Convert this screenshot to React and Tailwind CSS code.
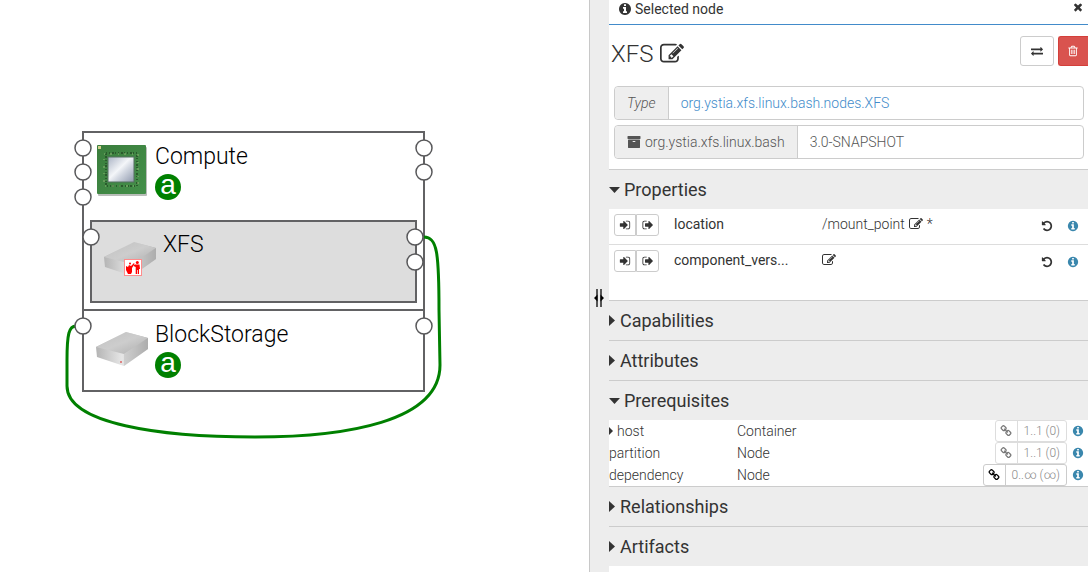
const P = {
  info: "M1152 1376v-160q0-14-9-23t-23-9h-96v-512q0-14-9-23t-23-9h-320q-14 0-23 9t-9 23v160q0 14 9 23t23 9h96v320h-96q-14 0-23 9t-9 23v160q0 14 9 23t23 9h448q14 0 23-9t9-23zm-128-896v-160q0-14-9-23t-23-9h-192q-14 0-23 9t-9 23v160q0 14 9 23t23 9h192q14 0 23-9t9-23zm640 416q0 209-103 385.5t-279.5 279.5-385.5 103-385.5-103-279.5-279.5-103-385.5 103-385.5 279.5-279.5 385.5-103 385.5 103 279.5 279.5 103 385.5z",
  edit: "M888 1184l116-116-152-152-116 116v56h96v96h56zm440-720q-16-16-33 1l-350 350q-17 17-1 33t33-1l350-350q17-17 1-33zm80 594v190q0 119-84.5 203.5t-203.5 84.5h-832q-119 0-203.5-84.5t-84.5-203.5v-832q0-119 84.5-203.5t203.5-84.5h832q63 0 117 25 15 7 18 23 3 17-9 29l-49 49q-14 14-32 8-23-6-45-6h-832q-66 0-113 47t-47 113v832q0 66 47 113t113 47h832q66 0 113-47t47-113v-126q0-13 9-22l64-64q15-15 35-7t20 29zm-96-738l288 288-672 672h-288v-288zm444 132l-92 92-288-288 92-92q28-28 68-28t68 28l152 152q28 28 28 68t-28 68z",
  signIn: "M1312 896q0 26-19 45l-544 544q-19 19-45 19t-45-19-19-45v-288h-448q-26 0-45-19t-19-45v-384q0-26 19-45t45-19h448v-288q0-26 19-45t45-19 45 19l544 544q19 19 19 45zm352-352v704q0 119-84.5 203.5t-203.5 84.5h-320q-13 0-22.5-9.5t-9.5-22.5q0-4-1-20t-.5-26.5 3-23.5 10-19.5 20.5-6.5h320q66 0 113-47t47-113v-704q0-66-47-113t-113-47h-312l-11.5-1-11.5-3-8-5.5-7-9-2-13.5q0-4-1-20t-.5-26.5 3-23.5 10-19.5 20.5-6.5h320q119 0 203.5 84.5t84.5 203.5z",
  signOut: "M704 1440q0 4 1 20t.5 26.5-3 23.5-10 19.5-20.5 6.5h-320q-119 0-203.5-84.5t-84.5-203.5v-704q0-119 84.5-203.5t203.5-84.5h320q13 0 22.5 9.5t9.5 22.5q0 4 1 20t.5 26.5-3 23.5-10 19.5-20.5 6.5h-320q-66 0-113 47t-47 113v704q0 66 47 113t113 47h312l11.5 1 11.5 3 8 5.5 7 9 2 13.5zm928-544q0 26-19 45l-544 544q-19 19-45 19t-45-19-19-45v-288h-448q-26 0-45-19t-19-45v-384q0-26 19-45t45-19h448v-288q0-26 19-45t45-19 45 19l544 544q19 19 19 45z",
  undo: "M1664 896q0 156-61 298t-164 245-245 164-298 61q-172 0-327-72.5t-264-204.5q-7-10-6.5-22.5t8.5-20.5l137-138q10-9 25-9 16 2 23 12 73 95 179 147t225 52q104 0 198.5-40.5t163.5-109.5 109.5-163.5 40.5-198.5-40.5-198.5-109.5-163.5-163.5-109.5-198.5-40.5q-98 0-188 35.5t-160 101.5l137 138q31 30 14 69-17 40-59 40h-448q-26 0-45-19t-19-45v-448q0-42 40-59 39-17 69 14l130 129q107-101 244.5-156.5t284.5-55.5q156 0 298 61t245 164 164 245 61 298z",
  trash: "M704 736v576q0 14-9 23t-23 9h-64q-14 0-23-9t-9-23v-576q0-14 9-23t23-9h64q14 0 23 9t9 23zm256 0v576q0 14-9 23t-23 9h-64q-14 0-23-9t-9-23v-576q0-14 9-23t23-9h64q14 0 23 9t9 23zm256 0v576q0 14-9 23t-23 9h-64q-14 0-23-9t-9-23v-576q0-14 9-23t23-9h64q14 0 23 9t9 23zm128 724v-948h-896v948q0 22 7 40.5t14.5 27 10.5 8.5h832q3 0 10.5-8.5t14.5-27 7-40.5zm-672-1076h448l-48-117q-7-9-17-11h-317q-10 2-17 11zm928 32v64q0 14-9 23t-23 9h-96v948q0 83-47 143.5t-113 60.5h-832q-66 0-113-58.5t-47-141.5v-952h-96q-14 0-23-9t-9-23v-64q0-14 9-23t23-9h309l70-167q15-37 54-63t79-26h320q40 0 79 26t54 63l70 167h309q14 0 23 9t9 23z",
  times: "M1490 1322q0 40-28 68l-136 136q-28 28-68 28t-68-28l-294-294-294 294q-28 28-68 28t-68-28l-136-136q-28-28-28-68t28-68l294-294-294-294q-28-28-28-68t28-68l136-136q28-28 68-28t68 28l294 294 294-294q28-28 68-28t68 28l136 136q28 28 28 68t-28 68l-294 294 294 294q28 28 28 68z",
  archive: "M1088 832q0-26-19-45t-45-19h-256q-26 0-45 19t-19 45 19 45 45 19h256q26 0 45-19t19-45zm576-192v960q0 26-19 45t-45 19h-1408q-26 0-45-19t-19-45v-960q0-26 19-45t45-19h1408q26 0 45 19t19 45zm64-448v256q0 26-19 45t-45 19h-1536q-26 0-45-19t-19-45v-256q0-26 19-45t45-19h1536q26 0 45 19t19 45z",
  exchange: "M1792 1184v192q0 13-9.5 22.5t-22.5 9.5h-1376v192q0 13-9.5 22.5t-22.5 9.5q-12 0-24-10l-319-320q-9-9-9-22 0-14 9-23l320-320q9-9 23-9 13 0 22.5 9.5t9.5 22.5v192h1376q13 0 22.5 9.5t9.5 22.5zm0-544q0 14-9 23l-320 320q-9 9-23 9-13 0-22.5-9.5t-9.5-22.5v-192h-1376q-13 0-22.5-9.5t-9.5-22.5v-192q0-13 9.5-22.5t22.5-9.5h1376v-192q0-14 9-23t23-9q12 0 24 10l319 319q9 9 9 23z",
  link: "M1520 1216q0-40-28-68l-208-208q-28-28-68-28-42 0-72 32 3 3 19 18.5t21.5 21.5 15 19 13 25.5 3.5 27.5q0 40-28 68t-68 28q-15 0-27.5-3.5t-25.5-13-19-15-21.5-21.5-18.5-19q-33 31-33 73 0 40 28 68l206 207q27 27 68 27 40 0 68-26l147-146q28-28 28-67zm-703-705q0-40-28-68l-206-207q-28-28-68-28-39 0-68 27l-147 146q-28 28-28 67 0 40 28 68l208 208q27 27 68 27 42 0 72-31-3-3-19-18.5t-21.5-21.5-15-19-13-25.5-3.5-27.5q0-40 28-68t68-28q15 0 27.5 3.5t25.5 13 19 15 21.5 21.5 18.5 19q33-31 33-73zm895 705q0 120-85 203l-147 146q-83 83-203 83-121 0-204-85l-206-207q-83-83-83-203 0-123 88-209l-88-88q-86 88-208 88-120 0-204-84l-208-208q-84-84-84-204t85-203l147-146q83-83 203-83 121 0 204 85l206 207q83 83 83 203 0 123-88 209l88 88q86-88 208-88 120 0 204 84l208 208q84 84 84 204z",
};

function Icon({ name, className = "size-3.5" }) {
  return (
    <svg viewBox="0 0 1792 1792" fill="currentColor" aria-hidden="true" className={`shrink-0 ${className}`}>
      <path d={P[name]} />
    </svg>
  );
}

function Chip() {
  return (
    <svg viewBox="0 0 52 52" className="size-[52px] shrink-0" aria-hidden="true">
      <defs>
        <linearGradient id="die" x1="0" y1="0" x2="1" y2="1">
          <stop offset="0" stopColor="#aab3c4" />
          <stop offset=".45" stopColor="#f4f6f9" />
          <stop offset=".6" stopColor="#d5dae3" />
          <stop offset="1" stopColor="#8e98ad" />
        </linearGradient>
        <linearGradient id="board" x1="0" y1="0" x2="1" y2="1">
          <stop offset="0" stopColor="#3a7d3c" />
          <stop offset="1" stopColor="#44904a" />
        </linearGradient>
      </defs>
      <rect x="2" y="2" width="49" height="49" rx="1" fill="#b9bdb9" />
      <rect x="1" y="0" width="49" height="49" rx="1" fill="url(#board)" />
      <rect x="2" y="1" width="3" height="3" fill="#cfd08c" />
      <rect x="10" y="8" width="31" height="33" fill="none" stroke="#2a5a2c" strokeWidth="2" strokeDasharray="1 2 1 2 2 1" />
      <rect x="8" y="9" width="34" height="32" fill="none" stroke="#8fb374" strokeWidth="1" strokeDasharray="1 5 2 6" />
      <rect x="12" y="12" width="26" height="25" fill="url(#die)" stroke="#557060" />
    </svg>
  );
}

function Disk({ id }) {
  return (
    <svg viewBox="0 0 52 36" className="h-9 w-[52px] shrink-0" aria-hidden="true">
      <defs>
        <linearGradient id={`${id}-top`} x1="0" y1="0" x2="1" y2="1">
          <stop offset="0" stopColor="#c0c0c0" />
          <stop offset=".5" stopColor="#cdcdcd" />
          <stop offset="1" stopColor="#adadad" />
        </linearGradient>
        <linearGradient id={`${id}-side`} x1="0" y1="0" x2="1" y2="0">
          <stop offset="0" stopColor="#b4b4b4" />
          <stop offset=".5" stopColor="#e6e6e6" />
          <stop offset="1" stopColor="#a8a8a8" />
        </linearGradient>
      </defs>
      <path d="M0 16L30 1L52 7V18L28 35L1 26Z" fill={`url(#${id}-side)`} />
      <path d="M0 16L30 1L52 7L28 23Z" fill={`url(#${id}-top)`} />
      <path d="M28 23L52 7V18L28 35Z" fill="#b4b4b4" opacity=".4" />
      <circle cx="25" cy="31" r="1" fill="#d66" />
    </svg>
  );
}

function FormatBadge() {
  return (
    <svg viewBox="0 0 18 17" className="absolute top-[26px] left-5 h-[17px] w-[18px]" aria-hidden="true">
      <rect x=".5" y=".5" width="17" height="16" fill="#fff" stroke="#ff8c8c" />
      <path d="M2 7L4 8L5 6L7 7L10 4L10.500 5L8 9L8 13L7 15H4L2 11Z" fill="#f00" />
      <path d="M11 5.500H15.500L16 10H15V15H13.700V11H13V15H11.700V8L9.500 7L10 6Z" fill="#f00" />
      <circle cx="6" cy="4.500" r="1" fill="#f00" />
      <circle cx="13.300" cy="3.500" r="1.500" fill="#f00" />
    </svg>
  );
}

function Abstract() {
  return (
    <span className="mt-[5px] block size-[26px] rounded-full bg-[#008000] text-center font-['Liberation_Sans',sans-serif] text-[28px] leading-[22px] font-normal text-white">
      a
    </span>
  );
}

const ports = [
  [83, 148], [83, 172], [83, 197], [424, 148], [424, 172],
  [91, 237], [415, 237], [415, 262], [83, 326], [424, 326],
];

function Canvas() {
  return (
    <main className="relative min-w-0 flex-1 overflow-hidden bg-white text-[23px] leading-6 font-light text-black">
      <section className="absolute top-[131px] left-[82px] flex h-[180px] w-[343px] gap-[7px] border-2 border-[#626264] pt-3 pl-3">
        <Chip />
        <div>
          <h2>Compute</h2>
          <Abstract />
        </div>
      </section>
      <section className="absolute top-[309px] left-[82px] flex h-[83px] w-[343px] gap-[7px] border-2 border-[#626264] pt-3 pl-3">
        <div className="pt-2"><Disk id="block" /></div>
        <div>
          <h2>BlockStorage</h2>
          <Abstract />
        </div>
      </section>
      <section className="absolute top-[220px] left-[90px] flex h-[83px] w-[327px] gap-[7px] border-2 border-[#626264] bg-[#dddddd] pt-[11px] pl-3">
        <div className="relative pt-2"><Disk id="xfs" /><FormatBadge /></div>
        <h2>XFS</h2>
      </section>
      <svg className="absolute top-0 left-0 h-[460px] w-[460px]" aria-hidden="true">
        <path d="M424 237C437 237 439 252 439 310L440 365C440 422 345 437 255 437C160 437 67 424 67 386V360C67 334 69 326 76 326" fill="none" stroke="#008000" strokeWidth="3" />
        {ports.map(([x, y]) => (
          <circle key={`${x}-${y}`} cx={x} cy={y} r="8" fill="#fff" stroke="#58585a" strokeWidth="1.500" />
        ))}
      </svg>
    </main>
  );
}

function Heading({ title, open }) {
  return (
    <h3 className="border-t border-[#cccccc] bg-[#ededed]">
      <button type="button" aria-expanded={!!open} className="flex h-[39px] w-full items-center gap-1 text-lg font-normal">
        {open ? (
          <svg viewBox="0 0 11 6" className="h-1.5 w-[11px]" aria-hidden="true"><path d="M0 0H11L5.500 6Z" fill="currentColor" /></svg>
        ) : (
          <svg viewBox="0 0 7 11" className="h-[11px] w-[7px]" aria-hidden="true"><path d="M0 0V11L6 5.500Z" fill="currentColor" /></svg>
        )}
        {title}
      </button>
    </h3>
  );
}

function Property({ name, value, required, last }) {
  return (
    <div className={last ? "flex h-[55px] items-start pt-[5px]" : "flex h-9 items-start border-b border-[#dddddd] pt-[5px]"}>
      <div className="flex pl-[5px]">
        <button type="button" aria-label="Set as input" className="flex h-[22px] w-[22px] items-center justify-center rounded-l-[3px] border border-[#cccccc]">
          <Icon name="signIn" className="size-3" />
        </button>
        <button type="button" aria-label="Set as output" className="flex h-[22px] w-[23px] items-center justify-center rounded-r-[3px] border border-[#cccccc]">
          <Icon name="signOut" className="size-3" />
        </button>
      </div>
      <div className="w-[163px] pl-[15px] font-normal">{name}</div>
      <div className="flex min-w-0 flex-1 items-center gap-1">
        {value && <span>{value}</span>}
        <button type="button" aria-label={`Edit ${name}`} className="flex h-5 items-center"><Icon name="edit" /></button>
        {required && <span>*</span>}
      </div>
      <div className="flex items-center gap-3.5 pt-1.5 pr-[9px]">
        <button type="button" aria-label="Reset"><Icon name="undo" className="size-3" /></button>
        <Icon name="info" className="size-3 text-[#3a87ad]" />
      </div>
    </div>
  );
}

function Requirement({ name, type, bounds, nested, active }) {
  return (
    <tr className="h-[22px]">
      <td className="w-32 p-0">
        <span className="flex items-center gap-1">
          {nested && <svg viewBox="0 0 4 8" className="h-2 w-1" aria-hidden="true"><path d="M0 0V8L4 4Z" fill="currentColor" /></svg>}
          {name}
        </span>
      </td>
      <td className="p-0">{type}</td>
      <td className="p-0">
        <div className="flex items-center justify-end gap-[5px] pr-1">
          <div className={active ? "flex h-[22px] rounded-[3px] border border-[#cccccc]" : "flex h-[22px] rounded-[3px] border border-[#dddddd]"}>
            <button type="button" disabled={!active} aria-label={`Link ${name}`} className={active ? "flex w-[22px] items-center justify-center border-r border-[#cccccc] text-black" : "flex w-[22px] items-center justify-center border-r border-[#dddddd] text-[#777777]"}>
              <Icon name="link" className="size-3" />
            </button>
            <span className="px-1.5 text-xs leading-5 text-[#888888]">{bounds}</span>
          </div>
          <Icon name="info" className="size-3 text-[#3a87ad]" />
        </div>
      </td>
    </tr>
  );
}

function Panel() {
  return (
    <aside className="flex w-[499px] shrink-0 border-l border-[#c8c8c8] bg-[#ededed] text-sm leading-5 font-light text-[#333333]">
      <div className="flex w-[19px] shrink-0 flex-col items-center pt-[289px] pr-0.5">
        <svg viewBox="0 0 10 18" className="h-[18px] w-2.5" aria-hidden="true">
          <path d="M3 0V18M7 0V18" stroke="#555" strokeWidth="2" />
          <path d="M3.500 5.500V12.500L0 9ZM6.500 5.500V12.500L10 9Z" fill="#000" />
        </svg>
      </div>
      <div className="min-w-0 flex-1 bg-white">
        <header className="flex h-[25px] items-start justify-between border-b border-[#428bca] pr-1 pl-[9px]">
          <div className="flex h-[18px] items-center gap-[3px] font-normal"><Icon name="info" />Selected node</div>
          <button type="button" aria-label="Close" className="flex h-3.5 items-center"><Icon name="times" className="size-3" /></button>
        </header>
        <div className="flex h-[61px] items-start justify-between pt-[11px] pl-0.5">
          <h1 className="flex items-center gap-[7px] pt-1 text-2xl leading-7">
            XFS
            <button type="button" aria-label="Rename"><Icon name="edit" className="size-6" /></button>
          </h1>
          <div className="flex gap-1">
            <button type="button" aria-label="Replace" className="flex h-[30px] w-[34px] items-center justify-center rounded-[3px] border border-[#cccccc]"><Icon name="exchange" className="size-3" /></button>
            <button type="button" aria-label="Delete" className="flex h-[30px] w-[30px] items-center rounded-l-[3px] border border-r-0 border-[#d43f3a] bg-[#d9534f] pl-2 text-white"><Icon name="trash" className="size-3" /></button>
          </div>
        </div>
        <div className="flex flex-col gap-[5px] pr-1 pb-2.5 pl-[5px] text-[#555555]">
          <div className="flex h-[34px] items-center rounded border border-[#cccccc]">
            <span className="flex h-full items-center rounded-l border-r border-[#cccccc] bg-[#eeeeee] px-3 italic">Type</span>
            <a href="#type" className="px-3 text-[#428bca]">org.ystia.xfs.linux.bash.nodes.XFS</a>
          </div>
          <div className="flex h-[34px] items-center rounded border border-[#cccccc]">
            <span className="flex h-full items-center gap-1 rounded-l border-r border-[#cccccc] bg-[#eeeeee] px-3"><Icon name="archive" />org.ystia.xfs.linux.bash</span>
            <span className="px-3">3.0-SNAPSHOT</span>
          </div>
        </div>
        <Heading title="Properties" open />
        <Property name="location" value="/mount_point" required />
        <Property name="component_vers..." last />
        <Heading title="Capabilities" />
        <Heading title="Attributes" />
        <Heading title="Prerequisites" open />
        <table className="w-full border-collapse">
          <tbody>
            <Requirement name="host" type="Container" bounds="1..1 (0)" nested />
            <Requirement name="partition" type="Node" bounds="1..1 (0)" />
            <Requirement name="dependency" type="Node" bounds="0..∞ (∞)" active />
          </tbody>
        </table>
        <Heading title="Relationships" />
        <Heading title="Artifacts" />
      </div>
    </aside>
  );
}

export default function App() {
  return (
    <div className="flex min-h-screen overflow-hidden font-['Roboto',sans-serif]">
      <Canvas />
      <Panel />
    </div>
  );
}
